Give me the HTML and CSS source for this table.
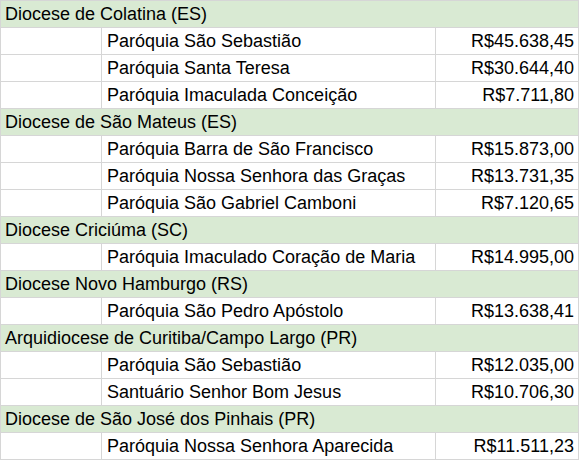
FILE: index.html
```html
<!DOCTYPE html>
<html lang="pt">
<head>
<meta charset="utf-8">
<link rel="stylesheet" href="styles.css">
</head>
<body>
<table class="sheet">
  <colgroup>
    <col class="c1">
    <col class="c2">
    <col class="c3">
  </colgroup>
  <tbody>
    <tr class="group"><td colspan="3">Diocese de Colatina (ES)</td></tr>
    <tr><td></td><td>Paróquia São Sebastião</td><td class="num">R$45.638,45</td></tr>
    <tr><td></td><td>Paróquia Santa Teresa</td><td class="num">R$30.644,40</td></tr>
    <tr><td></td><td>Paróquia Imaculada Conceição</td><td class="num">R$7.711,80</td></tr>
    <tr class="group"><td colspan="3">Diocese de São Mateus (ES)</td></tr>
    <tr><td></td><td>Paróquia Barra de São Francisco</td><td class="num">R$15.873,00</td></tr>
    <tr><td></td><td>Paróquia Nossa Senhora das Graças</td><td class="num">R$13.731,35</td></tr>
    <tr><td></td><td>Paróquia São Gabriel Camboni</td><td class="num">R$7.120,65</td></tr>
    <tr class="group"><td colspan="3">Diocese Criciúma (SC)</td></tr>
    <tr><td></td><td>Paróquia Imaculado Coração de Maria</td><td class="num">R$14.995,00</td></tr>
    <tr class="group"><td colspan="3">Diocese Novo Hamburgo (RS)</td></tr>
    <tr><td></td><td>Paróquia São Pedro Apóstolo</td><td class="num">R$13.638,41</td></tr>
    <tr class="group"><td colspan="3">Arquidiocese de Curitiba/Campo Largo (PR)</td></tr>
    <tr><td></td><td>Paróquia São Sebastião</td><td class="num">R$12.035,00</td></tr>
    <tr><td></td><td>Santuário Senhor Bom Jesus</td><td class="num">R$10.706,30</td></tr>
    <tr class="group"><td colspan="3">Diocese de São José dos Pinhais (PR)</td></tr>
    <tr><td></td><td>Paróquia Nossa Senhora Aparecida</td><td class="num">R$11.511,23</td></tr>
  </tbody>
</table>
</body>
</html>
```
FILE: styles.css
```css
html, body {
  margin: 0;
  padding: 0;
  background: #ffffff;
}

.sheet {
  border-collapse: collapse;
  table-layout: fixed;
  width: 578px;
  font-family: "Liberation Sans", Arial, sans-serif;
  font-size: 18px;
  color: #000000;
}

.c1 { width: 101px; }
.c2 { width: 334px; }
.c3 { width: 143px; }

.sheet td {
  border: 1px solid #d6d6d6;
  height: 26px;
  padding: 1px 4px 0 5px;
  line-height: 25px;
  white-space: nowrap;
  overflow: hidden;
  box-sizing: border-box;
}

.sheet .group td {
  background: #d9ead3;
  padding-left: 4px;
}

.sheet td.num {
  text-align: right;
  padding-right: 4px;
}
```
